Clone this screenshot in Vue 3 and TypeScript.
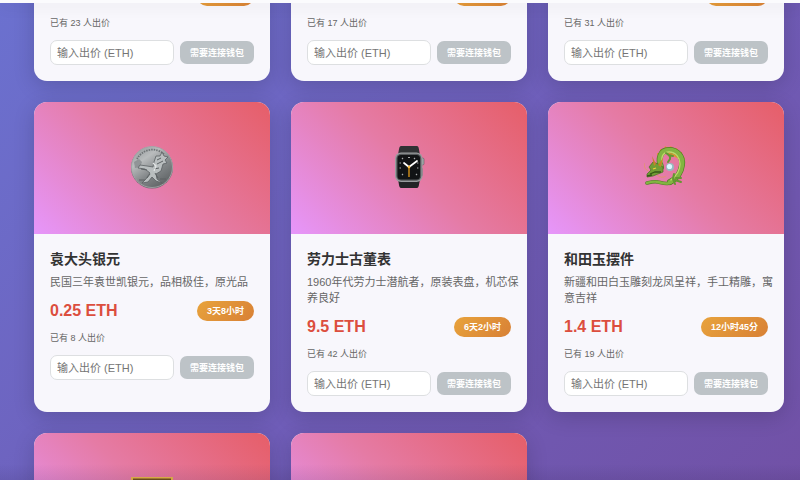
<script setup lang="ts">
import { onMounted, ref } from 'vue'

type Art = 'coin' | 'watch' | 'dragon' | 'frame' | 'none'

interface Auction {
  id: number
  art?: Art
  title?: string
  description?: string
  price?: string
  timeLeft?: string
  bids?: number
}

const auctions: Auction[] = [
  { id: 1, timeLeft: '2天5小时', bids: 23 },
  { id: 2, timeLeft: '1天8小时', bids: 17 },
  { id: 3, timeLeft: '5天12小时', bids: 31 },
  { id: 4, art: 'coin', title: '袁大头银元', description: '民国三年袁世凯银元，品相极佳，原光品', price: '0.25 ETH', timeLeft: '3天8小时', bids: 8 },
  { id: 5, art: 'watch', title: '劳力士古董表', description: '1960年代劳力士潜航者，原装表盘，机芯保养良好', price: '9.5 ETH', timeLeft: '6天2小时', bids: 42 },
  { id: 6, art: 'dragon', title: '和田玉摆件', description: '新疆和田白玉雕刻龙凤呈祥，手工精雕，寓意吉祥', price: '1.4 ETH', timeLeft: '12小时45分', bids: 19 },
  { id: 7, art: 'frame' },
  { id: 8, art: 'none' },
]

const scroller = ref<HTMLElement | null>(null)

onMounted(() => {
  if (scroller.value) scroller.value.scrollTop = 34
})
</script>

<template>
  <div class="shell">
    <header class="topbar"></header>
    <main ref="scroller" class="content">
      <div class="grid">
        <article v-for="item in auctions" :key="item.id" class="card">
          <div v-if="item.art" class="cover">
            <svg v-if="item.art === 'coin'" class="art" viewBox="0 0 44 44" aria-hidden="true">
              <defs>
                <linearGradient id="silver" x1="0" y1="0" x2="0.7" y2="1">
                  <stop offset="0" stop-color="#8d9294" />
                  <stop offset="0.35" stop-color="#b9bcbd" />
                  <stop offset="0.65" stop-color="#85898b" />
                  <stop offset="1" stop-color="#606466" />
                </linearGradient>
              </defs>
              <circle cx="22" cy="22.5" r="21" fill="#686c6e" />
              <circle cx="22" cy="22" r="20.5" fill="url(#silver)" stroke="#a8acad" stroke-width="0.8" />
              <path d="M7 14A17.500 17.500 0 0 1 34 9" fill="none" stroke="#6f7476" stroke-width="1.8" stroke-dasharray="1.5 1" />
              <path d="M4 17l5-3 3 3-2 5-5 1z" fill="#777c7e" opacity="0.6" />
              <path d="M24 17l2-6 4 0 2-4 2 4 4 1-3 3 2 3-4 1-2 7-5 3 1 5 5 4-6-2-4-4-4 5-6 1 4-4 4-6-5-4-7-1 2-3 7 1 6 1z" fill="#b9bebf" stroke="#5c6163" stroke-width="0.8" />
              <path d="M27 15l4-2M27 19l6-3M24 24l5-1M20 29l-3 4M25 28l3 5M11 24l6 1M9 35h6M30 34h6" fill="none" stroke="#5c6163" stroke-width="1" />
              <path d="M23 18l3 3-2 5" fill="none" stroke="#e2e5e5" stroke-width="1.2" />
            </svg>
            <svg v-else-if="item.art === 'watch'" class="art" viewBox="0 0 44 44" aria-hidden="true">
              <path d="M14 1h16c2 0 2 4 3 9H11c1-5 1-9 3-9z" fill="#303234" />
              <path d="M11 34h22c-1 5-1 9-3 9H14c-2 0-2-4-3-9z" fill="#222426" />
              <rect x="34" y="13" width="3" height="7" rx="1.4" fill="#a5a9ab" stroke="#4c5052" stroke-width="0.5" />
              <rect x="34" y="23" width="1.6" height="8" rx="0.8" fill="#696c6e" />
              <rect x="8" y="7.500" width="27.500" height="29.500" rx="6" fill="#989c9e" />
              <rect x="9.300" y="8.800" width="25" height="27" rx="5" fill="#54585a" />
              <rect x="10.500" y="10" width="22.500" height="24.500" rx="3.500" fill="#111315" />
              <g stroke="#a9acad" stroke-width="1.2">
                <path d="M21 12.500h2M27 14l1-1M30 18h1.400M30 23h1.400M29 29l1 1M16 29l-1 1M12.500 23H14M12.500 18H14M16 14l-1-1" />
              </g>
              <path d="M22 22v10" stroke="#f7a719" stroke-width="1.200" />
              <path d="M22 22l-5-4M22 22l8-6" stroke="#fff" stroke-width="1.700" stroke-linecap="round" />
              <circle cx="22" cy="22" r="1.300" fill="#ffc142" />
            </svg>
            <svg v-else-if="item.art === 'dragon'" class="art" viewBox="0 0 44 44" aria-hidden="true">
              <path d="M14 12l-1-4 3 0 0-4 4 1 1-4 3 2 3-2 2 3 4-1 1 4 4 0 0 4 3 2-2 3-20-10z" fill="#e5952f" />
              <g fill="none" stroke-linecap="round" stroke-linejoin="round">
                <path d="M17 22C14 14 16 5 25 5c9 0 14 7 13 15-1 8-6 14-12 17" stroke="#527d27" stroke-width="6" />
                <path d="M32 34c-7 7-13 4-18 3-4-1-7 0-11 1" stroke="#527d27" stroke-width="3.600" />
                <path d="M17 22C14 14 16 5 25 5c9 0 14 7 13 15-1 8-6 14-12 17" stroke="#82b441" stroke-width="4.600" />
                <path d="M32 34c-7 7-13 4-18 3-4-1-7 0-11 1" stroke="#82b441" stroke-width="2.400" />
                <path d="M18 17c-1-6 2-10 7-10 7 0 11 6 11 12 0 6-4 12-9 16" stroke="#bfd66b" stroke-width="1.300" />
                <path d="M22 8c3 2 5 3 4 6l-2 3M25 10l4 1M31 39l-2-5 1-5M31 35l6 2M32 33l5 0" stroke="#659631" stroke-width="2" />
              </g>
              <path d="M14 19L9 17 5 22 7 25 3 29 3 32 9 31 14 29 19 27 19 22z" fill="#719d35" stroke="#476b22" stroke-width="0.700" />
              <path d="M10 21L8 11l4 8M14 20l5-7-2 9" fill="#c8802a" />
              <path d="M6 29l5-2 6 0M3 31l5-1" fill="none" stroke="#365718" stroke-width="1.300" />
              <path d="M9 24l3-1" stroke="#f1cc40" stroke-width="1.200" />
              <path d="M5 26Q0 25 0 18M13 30q5 4 9 1" fill="none" stroke="#df9d58" stroke-width="0.700" />
              <circle cx="26" cy="22" r="4" fill="#85c9c8" opacity="0.800" />
              <circle cx="25.500" cy="21.500" r="2.600" fill="#ddf9ff" />
            </svg>
            <svg v-else-if="item.art === 'frame'" class="art" viewBox="0 0 44 44" aria-hidden="true">
              <rect x="1" y="1" width="42" height="42" fill="#e7b747" />
              <rect x="3" y="2.500" width="38" height="39" fill="#72501d" />
              <rect x="8" y="8" width="28" height="28" fill="#b7d7db" />
            </svg>
          </div>
          <div v-if="item.timeLeft" class="body">
            <h3 v-if="item.title" class="title">{{ item.title }}</h3>
            <p v-if="item.description" class="description">{{ item.description }}</p>
            <div class="meta">
              <strong v-if="item.price" class="price">{{ item.price }}</strong>
              <span class="badge">{{ item.timeLeft }}</span>
            </div>
            <p class="bids">已有 {{ item.bids }} 人出价</p>
            <form class="bid-form" @submit.prevent>
              <input class="bid-input" type="text" inputmode="decimal" placeholder="输入出价 (ETH)" aria-label="输入出价 (ETH)" />
              <button class="bid-button" type="submit" disabled>需要连接钱包</button>
            </form>
          </div>
        </article>
      </div>
    </main>
  </div>
</template>

<style>
body {
  margin: 0;
}
</style>

<style scoped>
.shell {
  display: flex;
  flex-direction: column;
  height: 100vh;
  overflow: hidden;
  position: relative;
  background: linear-gradient(135deg, #6b71cf 0%, #6f5db8 55%, #7151a6 100%);
  font-family: "Liberation Sans", "Noto Sans CJK SC", sans-serif;
  color: #333;
}

.shell::after {
  content: "";
  position: absolute;
  inset: auto 0 0;
  height: 16px;
  background: linear-gradient(transparent, rgba(30, 20, 60, 0.1));
  pointer-events: none;
}

.topbar {
  flex: none;
  height: 3px;
  background: #fbfbfd;
  box-shadow: 0 2px 16px rgba(0, 0, 0, 0.14);
  position: relative;
  z-index: 1;
}

.content {
  flex: 1;
  min-height: 0;
  overflow-y: auto;
  scrollbar-width: none;
}

.grid {
  display: grid;
  grid-template-columns: repeat(3, minmax(0, 1fr));
  gap: 21px;
  padding: 0 16px 21px 34px;
}

.card {
  overflow: hidden;
  border-radius: 13px;
  background: #f8f7fc;
  box-shadow: 0 5px 21px rgba(0, 0, 0, 0.16);
}

.cover {
  display: flex;
  align-items: center;
  justify-content: center;
  height: 132px;
  box-sizing: border-box;
  padding-bottom: 3px;
  background: linear-gradient(45deg, #e696fb 0%, #e57ba5 50%, #e65e68 100%);
}

.art {
  width: 44px;
  height: 44px;
}

.body {
  padding: 16px;
}

.title {
  margin: 0 0 6px;
  font-size: 14px;
  line-height: 18px;
  font-weight: 700;
}

.description {
  margin: 0 -8px 10px 0;
  font-size: 11px;
  line-height: 16px;
  color: #666;
}

.meta {
  display: flex;
  align-items: center;
  height: 21px;
  margin-bottom: 10px;
}

.price {
  font-size: 16px;
  line-height: 20px;
  color: #dc4e3e;
}

.badge {
  margin-left: auto;
  padding: 0 10px;
  border-radius: 10px;
  background: linear-gradient(135deg, #e8a33c, #d88035);
  color: #fff;
  font-size: 9px;
  font-weight: 700;
  line-height: 20px;
  white-space: nowrap;
}

.bids {
  margin: 0 0 10px;
  font-size: 9px;
  line-height: 14px;
  color: #666;
}

.bid-form {
  display: flex;
  align-items: center;
  gap: 6px;
}

.bid-input {
  flex: 1;
  min-width: 0;
  height: 25px;
  box-sizing: border-box;
  padding: 0 6px;
  border: 1px solid #dddfe1;
  border-radius: 7px;
  background: #fff;
  color: #333;
  font-family: inherit;
  font-size: 11px;
}

.bid-input::placeholder {
  color: #757575;
}

.bid-button {
  height: 23px;
  padding: 0 10px;
  border: 0;
  border-radius: 7px;
  background: #bdc3c7;
  color: #fff;
  font-family: inherit;
  font-size: 9px;
  font-weight: 700;
  white-space: nowrap;
}
</style>
